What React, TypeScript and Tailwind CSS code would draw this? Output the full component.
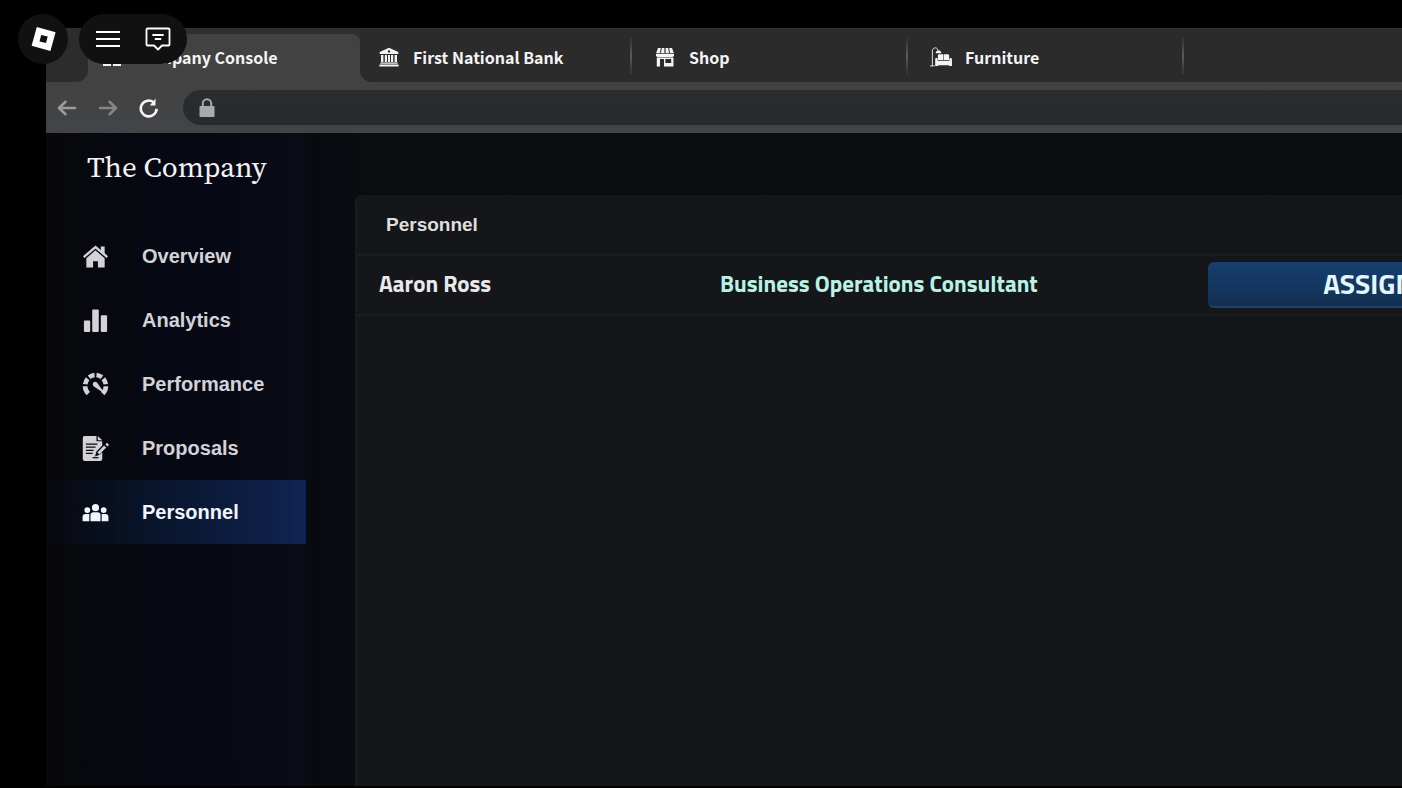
import React from "react";

type IconProps = { className?: string };

function BankIcon({ className }: IconProps) {
  return (
    <svg viewBox="0 0 20 20" className={className} fill="currentColor" aria-hidden="true">
      <path fillRule="evenodd" d="M10 .8 19.3 5v2H.7V5L10 .8Zm0 2.4a1.2 1.2 0 1 0 0 2.4 1.2 1.2 0 0 0 0-2.4Z" />
      <path d="M2 8h2.4v7H2zM5.8 8H8v7H5.800zM9 8h2v7H9zM12 8h2.200v7H12zM15.600 8H18v7h-2.400z" />
      <path d="M1.400 15.600h17.200v1.200H1.400zM.4 17.400h19.200v2H.4z" />
    </svg>
  );
}

function ShopIcon({ className }: IconProps) {
  return (
    <svg viewBox="0 0 20 20" className={className} fill="currentColor" aria-hidden="true">
      <path d="M3 1h2.800L5 6H1.200zM6.800 1h2.600v5H6zM10.600 1h2.600l.8 5h-3.400zM14.200 1H17l1.800 5H15z" />
      <path d="M1 6.800h18v1.400a1.800 1.800 0 0 1-1.800 1.800H2.800A1.800 1.800 0 0 1 1 8.200z" />
      <path fillRule="evenodd" d="M1.800 10.600h16.700V19.500H9V12H5v7.500H1.800zM10.400 12v4h5.800v-4z" />
    </svg>
  );
}

function FurnitureIcon({ className }: IconProps) {
  return (
    <svg viewBox="0 0 24 22" className={className} aria-hidden="true">
      <path d="M0 20.800h5M2.500 20.500V4.500c0-4.500 5.500-4.500 6-1.200" fill="none" stroke="currentColor" strokeWidth="1" />
      <path d="M6.200 6.800c.2-4.200 5.600-4.200 6.200 0z" fill="currentColor" />
      <path d="M8.500 9.500A1.500 1.500 0 0 1 10 8h4.600v6.200H8.500zM15.200 8h4.300A1.500 1.500 0 0 1 21 9.500v4.700h-5.800z" fill="currentColor" />
      <path d="M5.600 13.500c0-1.700 2.700-1.700 2.700 0V15h13v-1.500c0-1.700 2.700-1.700 2.700 0V21h-3.200v-1H9v1H5.600z" fill="currentColor" />
    </svg>
  );
}

function ConsoleIcon({ className }: IconProps) {
  return (
    <svg viewBox="0 0 20 20" className={className} fill="currentColor" aria-hidden="true">
      <path d="M1 1h8v8H1zM11 1h8v8h-8zM1 11h8v8H1zM11 11h8v8h-8z" />
    </svg>
  );
}

function ArrowIcon({ className }: IconProps) {
  return (
    <svg viewBox="0 0 20 20" className={className} fill="none" stroke="currentColor" strokeWidth="2.600" strokeLinecap="round" strokeLinejoin="round" aria-hidden="true">
      <path d="M18 10H2.500M8.500 3.800 2 10l6.500 6.200" />
    </svg>
  );
}

function ReloadIcon({ className }: IconProps) {
  return (
    <svg viewBox="0 0 20 20" className={className} aria-hidden="true">
      <path d="M17.600 10.800A7.900 7.900 0 1 1 14.200 4" fill="none" stroke="currentColor" strokeWidth="2.600" />
      <path d="M16.500.6v6.800H10.800z" fill="currentColor" />
    </svg>
  );
}

function LockIcon({ className }: IconProps) {
  return (
    <svg viewBox="0 0 16 20" className={className} aria-hidden="true">
      <path d="M3.800 9V5.500a4.200 4.200 0 0 1 8.400 0V9" fill="none" stroke="currentColor" strokeWidth="2" />
      <rect x=".5" y="8" width="15" height="11" rx="1" fill="currentColor" />
    </svg>
  );
}

function HomeIcon({ className }: IconProps) {
  return (
    <svg viewBox="0 0 28 28" className={className} aria-hidden="true">
      <path d="M1.800 14.600 14 4.200l12.200 10.400" fill="none" stroke="currentColor" strokeWidth="2.500" />
      <path d="M19.500 3.500h4v8.500l-4-3.400z" fill="currentColor" />
      <path d="M14 7.600 23.500 15.800V25.500h-7V19h-5v6.500h-7v-9.700z" fill="currentColor" />
    </svg>
  );
}

function ChartIcon({ className }: IconProps) {
  return (
    <svg viewBox="0 0 28 28" className={className} fill="currentColor" aria-hidden="true">
      <rect x="2" y="14" width="6.500" height="12" rx="1" />
      <rect x="10.600" y="2.500" width="6.800" height="23.500" rx="1" />
      <rect x="19.500" y="8.500" width="6.500" height="17.500" rx="1" />
    </svg>
  );
}

function GaugeIcon({ className }: IconProps) {
  return (
    <svg viewBox="0 0 28 28" className={className} aria-hidden="true">
      <path
        d="M6.500 23.500A11 11 0 0 1 3.200 15.800M3.300 13.800A11 11 0 0 1 5.900 8M7.400 6.500A11 11 0 0 1 13 4.200M15 4.200A11 11 0 0 1 20.600 6.500M22.100 8A11 11 0 0 1 24.700 13.800M24.800 15.800A11 11 0 0 1 21.500 23.500"
        fill="none"
        stroke="currentColor"
        strokeWidth="4.800"
      />
      <path d="M11.800 12c1.400-1.400 3-.8 3.900.2l6.300 8.700c.3.700-.4 1.400-1.100 1l-8.500-5.700c-1.200-1-1.700-2.800-.6-4.200z" fill="currentColor" />
    </svg>
  );
}

function ProposalIcon({ className }: IconProps) {
  return (
    <svg viewBox="0 0 28 28" className={className} aria-hidden="true">
      <path d="M2.500 1H15v5.500h6V11l-6 6.200-1.500 5 4.800-1.700L21 17.800V25a2 2 0 0 1-2 2H2.500A2 2 0 0 1 .8 25V3A2 2 0 0 1 2.500 1z" fill="currentColor" />
      <path d="M16.400 1 21 5.400h-4.600z" fill="currentColor" />
      <path d="M4 9.500h12M4 12.700h10M4 15.900h8M4 19.100h7" stroke="#080913" strokeWidth="1.300" />
      <path d="M11 23.500h6" stroke="#080913" strokeWidth="1.300" />
      <path d="m17 19.200 7-7.200" stroke="currentColor" strokeWidth="3" />
      <path d="m25.400 10.800 1.600-1.700" stroke="currentColor" strokeWidth="3" />
    </svg>
  );
}

function PeopleIcon({ className }: IconProps) {
  return (
    <svg viewBox="0 0 28 28" className={className} fill="currentColor" aria-hidden="true">
      <circle cx="14" cy="9" r="3.700" />
      <circle cx="5.500" cy="11.500" r="3" />
      <circle cx="22.500" cy="11.500" r="3" />
      <path d="M8.800 23v-6a3.300 3.300 0 0 1 3.300-3.300h3.800a3.300 3.300 0 0 1 3.300 3.300v6z" />
      <path d="M.6 23v-4.500a3 3 0 0 1 3-3h4V23zM20.400 23v-7.500h4a3 3 0 0 1 3 3V23z" />
    </svg>
  );
}

const tabs = [
  { label: "First National Bank", Icon: BankIcon, box: "w-[272px] pl-[18px]" },
  { label: "Shop", Icon: ShopIcon, box: "w-[276px] pl-[22px]" },
  { label: "Furniture", Icon: FurnitureIcon, box: "w-[276px] pl-[22px]" },
];

const menu = [
  { label: "Overview", Icon: HomeIcon },
  { label: "Analytics", Icon: ChartIcon },
  { label: "Performance", Icon: GaugeIcon },
  { label: "Proposals", Icon: ProposalIcon },
  { label: "Personnel", Icon: PeopleIcon, current: true },
];

const staff = [{ name: "Aaron Ross", role: "Business Operations Consultant" }];

function TabStrip() {
  return (
    <div className="flex h-[54px] shrink-0 bg-[#424242] font-['Noto_Sans_CJK_JP',sans-serif] text-base font-bold text-[#f4f4f4]">
      <div className="w-[42px] shrink-0 rounded-br-xl bg-[#2c2c2c]" />
      <div className="w-[272px] shrink-0 bg-[#2f2f2f] pt-[6px]">
        <button className="flex h-full w-full items-center gap-[14px] rounded-t-lg bg-[#424242] pb-[2px] pl-[14px] text-left">
          <ConsoleIcon className="h-5 w-5" />
          Company Console
        </button>
      </div>
      <div className="flex grow rounded-bl-xl border-t border-[#333333] bg-[#2b2b2b]">
        {tabs.map(({ label, Icon, box }) => (
          <div key={label} className={`flex shrink-0 items-center ${box}`}>
            <button className="flex grow items-center gap-[13px] pt-[3px] text-left">
              <Icon className="h-5 w-[22px]" />
              {label}
            </button>
            <span className="h-9 w-[2px] bg-linear-to-b from-[#333333] via-[#5c5c5c] to-[#333333]" />
          </div>
        ))}
      </div>
    </div>
  );
}

function Toolbar() {
  return (
    <div className="flex h-[51px] shrink-0 items-center bg-linear-to-b from-[#424242] to-[#434447] pl-[11px]">
      <button aria-label="Back" className="w-[41px] text-[#9b9b9b]">
        <ArrowIcon className="h-5 w-5" />
      </button>
      <button aria-label="Forward" className="w-[41px] text-[#858585]">
        <ArrowIcon className="h-5 w-5 rotate-180" />
      </button>
      <button aria-label="Reload" className="w-[44px] text-[#f5f5f5]">
        <ReloadIcon className="h-5 w-5" />
      </button>
      <label className="flex h-[35px] grow items-center gap-3 rounded-full bg-linear-to-b from-[#2c2d2d] via-[#282c2f] to-[#282b2d] pl-4 text-[#a9a9a9]">
        <LockIcon className="h-5 w-4" />
        <input aria-label="Address" className="grow bg-transparent text-base text-[#e5e5e5] outline-none" />
      </label>
    </div>
  );
}

function Sidebar() {
  return (
    <aside className="w-[260px] shrink-0 bg-linear-to-r from-[#08080b] via-[#060914] to-[#090b17] font-['Liberation_Sans',sans-serif]">
      <h1 className="flex h-[91px] items-start pt-3 pl-[41px] font-['Source_Serif_Pro','Source_Serif_4','Noto_Serif_CJK_JP','Noto_Serif_CJK_SC','Libre_Baskerville','Gelasio','Liberation_Serif',serif] text-[29px] leading-[44px] text-[#f3f3f5]">
        The Company
      </h1>
      <nav>
        {menu.map(({ label, Icon, current }) => (
          <a
            key={label}
            href="#"
            aria-current={current ? "page" : undefined}
            className={
              current
                ? "flex h-16 items-center gap-[33px] bg-linear-to-r from-transparent via-[#0a1730] to-[#102454] pl-9 text-xl font-bold text-[#f1f6ff]"
                : "flex h-16 items-center gap-[33px] pl-9 text-xl font-bold text-[#d2d2d7]"
            }
          >
            <Icon className="h-[27px] w-[27px]" />
            {label}
          </a>
        ))}
      </nav>
    </aside>
  );
}

function PersonnelPanel() {
  return (
    <section className="flex grow flex-col rounded-tl-md border-l-2 border-[#191a1d] bg-[#151619]">
      <h2 className="flex h-[59px] items-center pt-[2px] pl-[29px] font-['Liberation_Sans',sans-serif] text-[19px] font-bold text-[#dededf]">
        Personnel
      </h2>
      <table className="w-full table-fixed border-y-2 border-[#1c1d21] font-['Titillium_Web','Noto_Sans_CJK_JP',sans-serif] font-bold">
        <tbody>
          {staff.map(({ name, role }) => (
            <tr key={name} className="h-[60px]">
              <td className="w-[363px] pb-[2px] pl-[22px] text-[23px] text-[#e9e9eb]">{name}</td>
              <td className="w-[488px] pb-[2px] text-[23px] text-[#b9f2e4]">{role}</td>
              <td className="pr-8">
                <button className="block h-[46px] w-full rounded-md border-b-2 border-[#1b4566] bg-linear-to-b from-[#163f70] to-[#132f50] text-[28px] leading-[44px] text-[#e2f7ff]">
                  ASSIGN
                </button>
              </td>
            </tr>
          ))}
        </tbody>
      </table>
    </section>
  );
}

function GameMenu() {
  return (
    <div className="absolute top-[14px] left-[18px] flex gap-[11px] text-white">
      <button aria-label="Game menu" className="flex h-[50px] w-[50px] items-center justify-center rounded-full bg-[#111111]">
        <svg viewBox="0 0 26 26" className="h-[26px] w-[26px]" aria-hidden="true">
          <path fillRule="evenodd" fill="currentColor" d="M6.800 1 25.600 6.200 20.400 25 1.600 19.800zM11.200 8.900 9.500 15.400 16 17.100 17.700 10.600z" />
        </svg>
      </button>
      <div className="flex h-[50px] w-[108px] items-center justify-between rounded-full bg-[#111111] px-[15px]">
        <button aria-label="Open list">
          <svg viewBox="0 0 28 28" className="h-7 w-7" fill="none" stroke="currentColor" strokeWidth="2" aria-hidden="true">
            <path d="M2 7h24M2 14h24M2 21h24" />
          </svg>
        </button>
        <button aria-label="Chat">
          <svg viewBox="0 0 28 28" className="h-7 w-7" fill="none" stroke="currentColor" strokeWidth="1.800" strokeLinejoin="round" strokeLinecap="round" aria-hidden="true">
            <path d="M3.500 3.500h21a1 1 0 0 1 1 1v15a1 1 0 0 1-1 1H18L14 24.500 10 20.500H3.500a1 1 0 0 1-1-1v-15a1 1 0 0 1 1-1zM9 10h10M11.500 14h5" />
          </svg>
        </button>
      </div>
    </div>
  );
}

export default function App() {
  return (
    <div className="relative h-screen overflow-hidden bg-black pt-7 pb-[2px] pl-[46px]">
      <div className="-mr-[160px] flex h-full flex-col">
        <TabStrip />
        <Toolbar />
        <div className="flex grow bg-[#0b0c10]">
          <Sidebar />
          <main className="flex grow bg-linear-to-r from-[#080a0f] to-[#0b0c10] to-5% pt-[62px] pl-[49px]">
            <PersonnelPanel />
          </main>
        </div>
      </div>
      <GameMenu />
    </div>
  );
}
